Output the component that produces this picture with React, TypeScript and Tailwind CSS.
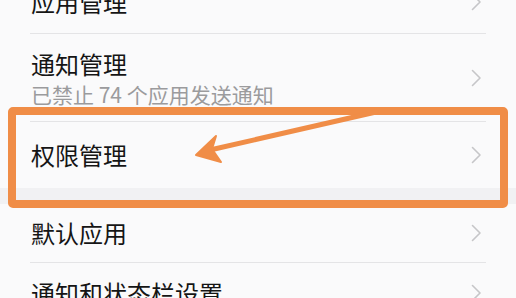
import React from "react";

const Chevron = () => (
  <svg width="11" height="18" viewBox="0 0 11 18" className="mr-[4px] shrink-0">
    <path d="M1.5 1.5 L9 9 L1.5 16.5" fill="none" stroke="#c6c6c8" strokeWidth="1.6" strokeLinecap="round" strokeLinejoin="round" />
  </svg>
);

const font = { fontFamily: '"Noto Sans CJK SC", "Noto Sans", sans-serif' };

const Row = ({ title, h, divider = true }: { title: string; h: string; divider?: boolean }) => (
  <div className={`mx-[30px] flex items-center justify-between ${h} ${divider ? "border-b border-[#e4e4e6]" : ""}`}>
    <span className="pl-[1px] text-[24px] leading-[28px] text-[#151515]">{title}</span>
    <Chevron />
  </div>
);

export default function App() {
  return (
    <div className="relative h-[298px] w-[516px] overflow-hidden bg-[#fafafb]" style={font}>
      <div className="-mt-[30px] flex flex-col">
        <div className="mx-[30px] flex h-[64px] items-center justify-between border-b border-[#e4e4e6]">
          <span className="pl-[1px] text-[24px] leading-[28px] text-[#151515]">应用管理</span>
          <Chevron />
        </div>
        <div className="mx-[30px] flex h-[88px] items-center justify-between border-b border-[#e4e4e6]">
          <div className="flex flex-col pl-[1px]">
            <span className="text-[24px] leading-[28px] text-[#151515]">通知管理</span>
            <span className="mt-[4px] text-[21px] leading-[24px] text-[#9b9b9d]">已禁止 74 个应用发送通知</span>
          </div>
          <Chevron />
        </div>
        <div className="mx-[30px] flex h-[66px] items-center justify-between">
          <span className="pl-[1px] text-[24px] leading-[28px] text-[#151515]">权限管理</span>
          <Chevron />
        </div>
        <div className="h-[16px] bg-[#f1f1f3]" />
        <Row title="默认应用" h="h-[59px]" />
        <Row title="通知和状态栏设置" h="h-[59px]" divider={false} />
      </div>

      <div className="absolute left-[8px] top-[107px] h-[101px] w-[500px] rounded-[5px] border-[8px] border-[#f08d47]" />

      <svg className="absolute left-0 top-0" width="516" height="298" viewBox="0 0 516 298">
        <line x1="376" y1="112" x2="210" y2="150" stroke="#f08d47" strokeWidth="5" strokeLinecap="round" />
        <polygon points="196,155 216,136 212,149 221,162" fill="#f08d47" stroke="#f08d47" strokeWidth="2" strokeLinejoin="round" />
      </svg>
    </div>
  );
}
